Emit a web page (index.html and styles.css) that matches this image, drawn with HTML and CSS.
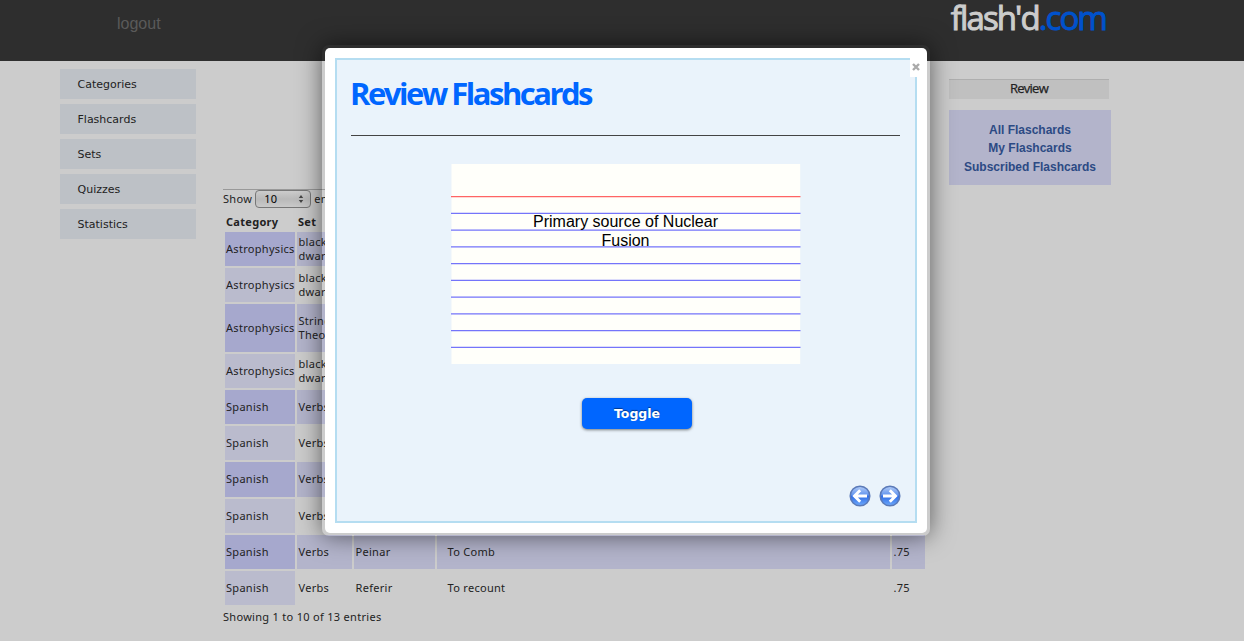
FILE: index.html
```
<!DOCTYPE html>
<html lang="en">
<head>
<meta charset="utf-8">
<title>flash'd.com</title>
<link rel="stylesheet" href="styles.css">
</head>
<body>
<header class="topbar">
  <a class="logout">logout</a>
  <div class="logo"><span class="logo-name">flash'd</span><span class="logo-tld">.com</span></div>
</header>
<div class="columns">
  <nav class="menu">
    <a>Categories</a>
    <a>Flashcards</a>
    <a>Sets</a>
    <a>Quizzes</a>
    <a>Statistics</a>
  </nav>
  <main class="listing">
    <div class="length">
      <span class="show">Show</span>
      <span class="select">10
        <svg width="6" height="10" viewBox="0 0 6 10"><path d="M3 1L5.2 4H0.8ZM3 9L5.2 6H0.8Z" fill="#444"/></svg>
      </span>
      <span>entries</span>
    </div>
    <table class="cards">
      <colgroup><col class="c1"><col class="c2"><col class="c3"><col class="c4"><col class="c5"></colgroup>
      <thead><tr><th>Category</th><th>Set</th><th></th><th></th><th></th></tr></thead>
      <tbody>
        <tr><td>Astrophysics</td><td>black dwarf</td><td></td><td></td><td></td></tr>
        <tr><td>Astrophysics</td><td>black dwarf</td><td></td><td></td><td></td></tr>
        <tr class="tall"><td>Astrophysics</td><td>String Theory</td><td></td><td></td><td></td></tr>
        <tr><td>Astrophysics</td><td>black dwarf</td><td></td><td></td><td></td></tr>
        <tr><td>Spanish</td><td>Verbs</td><td></td><td></td><td></td></tr>
        <tr><td>Spanish</td><td>Verbs</td><td></td><td></td><td></td></tr>
        <tr class="mid"><td>Spanish</td><td>Verbs</td><td></td><td></td><td></td></tr>
        <tr><td>Spanish</td><td>Verbs</td><td></td><td></td><td></td></tr>
        <tr><td>Spanish</td><td>Verbs</td><td>Peinar</td><td class="answer">To Comb</td><td>.75</td></tr>
        <tr><td>Spanish</td><td>Verbs</td><td>Referir</td><td class="answer">To recount</td><td>.75</td></tr>
      </tbody>
    </table>
    <div class="info">Showing 1 to 10 of 13 entries</div>
  </main>
  <aside class="side">
    <h2 class="side-title">Review</h2>
    <div class="side-links">
      <a>All Flaschards</a>
      <a>My Flashcards</a>
      <a>Subscribed Flashcards</a>
    </div>
  </aside>
</div>

<div class="modal">
  <div class="modal-box">
    <section class="panel">
      <h1><span>Review Flashcards</span></h1>
      <div class="flashcard">
        <svg class="rules" width="350" height="200" viewBox="0 0 350 200">
          <rect x="0.5" width="348.7" height="200" fill="#fffffa"/>
          <path d="M0 32.6H349.5" stroke="#ff6464" stroke-width="1.2"/>
          <path d="M0 49.4H349.5M0 66.1H349.5M0 82.9H349.5M0 99.6H349.5M0 116.4H349.5M0 133.1H349.5M0 149.9H349.5M0 166.6H349.5M0 183.4H349.5" stroke="#7474fa" stroke-width="1.2"/>
        </svg>
        <p>Primary source of Nuclear<br>Fusion</p>
      </div>
      <div class="actions"><button class="toggle"><span>Toggle</span></button></div>
      <div class="pager">
        <svg width="22" height="22" viewBox="0 0 22 22">
          <defs><linearGradient id="ball" x1="0" y1="0" x2="0" y2="1"><stop offset="0" stop-color="#b4cdf8"/><stop offset=".45" stop-color="#6395ee"/><stop offset=".5" stop-color="#2f6ce4"/><stop offset="1" stop-color="#6ea9fb"/></linearGradient></defs>
          <circle cx="11" cy="11" r="9.8" fill="url(#ball)" stroke="#5b7ab8" stroke-width="1.5"/>
          <path d="M11.2 5.2L5.4 11L11.2 16.8M6 11H18" fill="none" stroke="#fff" stroke-width="2.9"/>
        </svg>
        <svg width="22" height="22" viewBox="0 0 22 22">
          <circle cx="11" cy="11" r="9.8" fill="url(#ball)" stroke="#5b7ab8" stroke-width="1.5"/>
          <path d="M10.8 5.2L16.6 11L10.8 16.8M16 11H4" fill="none" stroke="#fff" stroke-width="2.9"/>
        </svg>
      </div>
    </section>
    <div class="close"><svg width="8" height="8" viewBox="0 0 8 8"><path d="M1 1L7 7M7 1L1 7" stroke="#aaa" stroke-width="2.4"/></svg></div>
  </div>
</div>
</body>
</html>
```
FILE: styles.css
```
* { box-sizing: border-box; }
body {
  margin: 0;
  height: 641px;
  overflow: hidden;
  position: relative;
  background: #ccc;
  color: #222;
  font: 11px/14px "Noto Sans", sans-serif;
}
.topbar {
  height: 61px;
  background: #2e2e2e;
  padding: 0 138px 0 117px;
  display: flex;
  justify-content: space-between;
}
.logout {
  font: 16px/18px "Liberation Sans", sans-serif;
  color: #5a5a5a;
  padding-top: 15px;
}
.logo {
  font: 33px/36px "Open Sans", sans-serif;
  letter-spacing: -1.9px;
  color: #ccc;
  -webkit-text-stroke: 1px;
}
.logo-tld { color: #0052cc; }
.columns { display: flex; padding-left: 60px; }
.menu {
  width: 136px;
  padding-top: 8px;
  display: flex;
  flex-direction: column;
  gap: 5px;
}
.menu a {
  height: 30px;
  padding: 1px 0 0 17.5px;
  background: #bdc1c6;
  font: 11px/30px "DejaVu Sans", sans-serif;
}
.listing {
  width: 704px;
  margin-left: 27px;
  padding-top: 128px;
  letter-spacing: .3px;
}
.length {
  height: 23px;
  border-top: 1px solid #999;
  display: flex;
  align-items: flex-start;
  gap: 3px;
  line-height: 18px;
}
.select {
  width: 56px;
  height: 18px;
  border: 1px solid #777;
  border-radius: 4px;
  background: linear-gradient(#ccc, #b9b9b9 50%, #c9c9c9);
  padding: 0 6px 0 8px;
  display: flex;
  align-items: center;
  justify-content: space-between;
  color: #000;
}
.cards {
  width: 704px;
  table-layout: fixed;
  border-spacing: 2px;
}
.c1 { width: 70px; }
.c2 { width: 55px; }
.c3 { width: 81px; }
.c4 { width: 453px; }
.c5 { width: 33px; }
.cards th { height: 16px; padding: 0 1px; text-align: left; }
.cards td { height: 34px; padding: 0 1px; vertical-align: middle; }
.cards td + td { padding-left: 1.5px; }
.cards .tall td { height: 48px; }
.cards .mid td { height: 35px; padding-bottom: 1px; }
.cards td.answer { padding-left: 10.5px; }
.cards tbody tr:nth-child(odd) td { background: #b3b4cb; }
.cards tbody tr:nth-child(odd) td:first-child { background: #a6a8cd; }
.cards tbody tr:nth-child(even) td:first-child { background: #babbcd; }
.info { padding-top: 3px; }
.side { width: 162px; margin-left: 22px; padding-top: 18px; }
.side-title {
  margin: 0 0 11px;
  width: 160px;
  height: 20px;
  border-top: 1px solid #aeaeae;
  background: #c0c0c0;
  text-align: center;
  font: 13px/17px "Open Sans", sans-serif;
  letter-spacing: -.75px;
  -webkit-text-stroke: .25px;
}
.side-links {
  height: 75px;
  padding-top: 10.5px;
  background: #b3b4cb;
  display: flex;
  flex-direction: column;
  text-align: center;
  font: bold 12px/18.5px "Liberation Sans", sans-serif;
  color: #2c4a84;
}
.modal {
  position: absolute;
  left: 322px;
  top: 45px;
  width: 608px;
  height: 491px;
  padding: 3px;
  border-radius: 7px;
  box-shadow: 0 0 24px rgba(0, 0, 0, .55);
}
.modal-box {
  position: relative;
  height: 485px;
  padding: 10px;
  border-radius: 5px;
  background: #fff;
}
.panel {
  height: 465px;
  border: 2px solid #b5ddf1;
  background: #eaf3fb;
  padding: 0 14px;
  display: flex;
  flex-direction: column;
}
.panel h1 {
  margin: 0;
  height: 76px;
  width: 549px;
  border-bottom: 1px solid #444;
  padding-top: 12px;
  font: bold 31px/42px "Open Sans", sans-serif;
  letter-spacing: -2.5px;
  text-indent: -1px;
  color: #06f;
}
.flashcard { display: grid; width: 350px; margin: 28px 0 0 100px; }
.rules, .flashcard p { grid-area: 1 / 1; }
.flashcard p {
  margin: 48px 1px 0 0;
  text-align: center;
  font: 16px/19px "Liberation Sans", sans-serif;
  color: #000;
}
.actions { margin: 34px 0 0 231px; }
.toggle {
  display: block;
  width: 110px;
  height: 31px;
  border: 0;
  border-radius: 5px;
  background: #06f;
  color: #fff;
  font: bold 12.5px/31px "DejaVu Sans", sans-serif;
  text-shadow: 0 -1px 1px rgba(0, 0, 0, .45);
  box-shadow: 0 1px 3px rgba(0, 0, 0, .5);
  padding: 0;
}
.pager { display: flex; gap: 8px; justify-content: flex-end; margin-top: 56px; }
.close {
  position: absolute;
  right: 0;
  top: 8px;
  width: 17px;
  height: 21px;
  background: #fff;
  display: flex;
  padding: 7px 0 0 2px;
}
```
